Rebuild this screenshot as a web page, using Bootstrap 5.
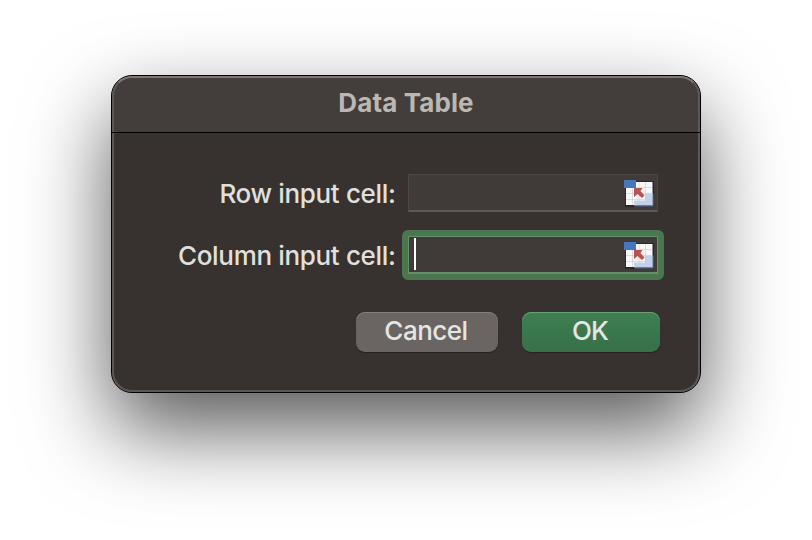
<!DOCTYPE html>
<html lang="en">
<head>
<meta charset="utf-8">
<meta name="viewport" content="width=device-width, initial-scale=1">
<title>Data Table</title>
<link href="https://cdn.jsdelivr.net/npm/bootstrap@5.3.0/dist/css/bootstrap.min.css" rel="stylesheet">
<style>
body{background:#fff;font-family:Inter,"Liberation Sans",sans-serif;font-size:26px;line-height:38px;color:#e1e0df;height:540px;overflow:hidden;padding:75px 111px}
.dialog{width:590px;height:318px;background:#37322f;border:1px solid #000;border-radius:21px;position:relative;box-shadow:0 36px 84px rgba(0,0,0,.66)}
/* light inner rim painted over header and body */
.dialog::after{content:"";position:absolute;inset:0;border-radius:20px;border:2px solid #5b5855;border-top-color:#7a7775;pointer-events:none}
.titlebar{height:57px;background:#433e3b;border-bottom:1px solid #000;border-radius:20px 20px 0 0;padding-bottom:3px}
/* divider line runs across the rim */
.titlebar::after{content:"";position:absolute;left:0;right:0;top:56px;height:1px;background:#000;z-index:1}
.titlebar h1{font-size:26px;line-height:31px;font-weight:700;color:#bcb7b3;margin:0;letter-spacing:.12px}
.form-area{padding:41px 42px 0 0}
.field-label{letter-spacing:-.34px;margin-right:12.5px;padding-top:2px;line-height:36px;font-weight:450;white-space:nowrap}
.cell-field{width:250px;height:38px;background:#403b38;border:1px solid #4c4845;border-bottom:2px solid #5d5956;padding-right:3px}
.cell-field svg{margin-top:2px}
.cell-field.active{border-color:#65906b;position:relative}
/* focus ring */
.cell-field.active::before{content:"";position:absolute;inset:-7px -7px -8px;border:6px solid #4a774d;border-radius:6px}
.caret{width:2px;height:32px;background:#fff;margin-left:5px;margin-bottom:1px}
.push-btn{height:40px;padding:0 2px 2px 0;border:0;border-radius:9px;color:#e6e5e4;font-size:26px;line-height:38px;letter-spacing:-.5px;font-weight:450}
.push-cancel{width:142px;background:#6a6562;box-shadow:inset 0 1px #827e7b,0 1px 1px #24201e}
.push-ok{width:138px;background:linear-gradient(#3e7f50,#37704a);box-shadow:inset 0 1px #69a078,0 1px 1px #24201e;letter-spacing:-.8px}
.push-btn:hover{color:#e6e5e4}
.push-cancel:hover{background:#6a6562}
.footer-row{padding-top:38px;padding-right:40px}
</style>
</head>
<body>
<svg class="d-none">
  <symbol id="picker" viewBox="0 0 30 28">
    <rect x="1" y="1" width="29" height="26" fill="#2b2826"/>
    <rect x="2" y="2" width="26.500" height="23" fill="#f8f8f9"/>
    <path d="M10 20.500h11v-7h8v12H10z" fill="#c3d2e8"/>
    <path d="M2 13.500h26M2 19.500h26M12 7.500h16M8.500 8v17M15 2v23M21.500 2v23" stroke="#c8ccd2" stroke-opacity=".6" stroke-width="1" fill="none"/>
    <path d="M29 14v12H11" stroke="#5f7ba0" stroke-width="1" fill="none"/>
    <path d="M0 0h12v8H0z" fill="#4677bd"/>
    <path d="M10 8h8.500l-2 3 4 4.500-2.500 2.500-4.500-4-3.500 3z" fill="#b9534f"/>
  </symbol>
</svg>
<main class="dialog" role="dialog" aria-labelledby="dialogTitle">
  <header class="titlebar d-flex align-items-center justify-content-center">
    <h1 id="dialogTitle">Data Table</h1>
  </header>
  <form class="form-area d-flex flex-column gap-4">
    <div class="d-flex justify-content-end align-items-center">
      <label class="field-label">Row input cell:</label>
      <div class="cell-field d-flex align-items-center justify-content-end">
        <svg width="30" height="28"><use href="#picker"/></svg>
      </div>
    </div>
    <div class="d-flex justify-content-end align-items-center">
      <label class="field-label">Column input cell:</label>
      <div class="cell-field active d-flex align-items-center justify-content-between">
        <span class="caret"></span>
        <svg width="30" height="28"><use href="#picker"/></svg>
      </div>
    </div>
  </form>
  <footer class="footer-row d-flex justify-content-end gap-4">
    <button type="button" class="btn push-btn push-cancel">Cancel</button>
    <button type="button" class="btn push-btn push-ok">OK</button>
  </footer>
</main>
<script src="https://cdn.jsdelivr.net/npm/bootstrap@5.3.0/dist/js/bootstrap.bundle.min.js"></script>
</body>
</html>
